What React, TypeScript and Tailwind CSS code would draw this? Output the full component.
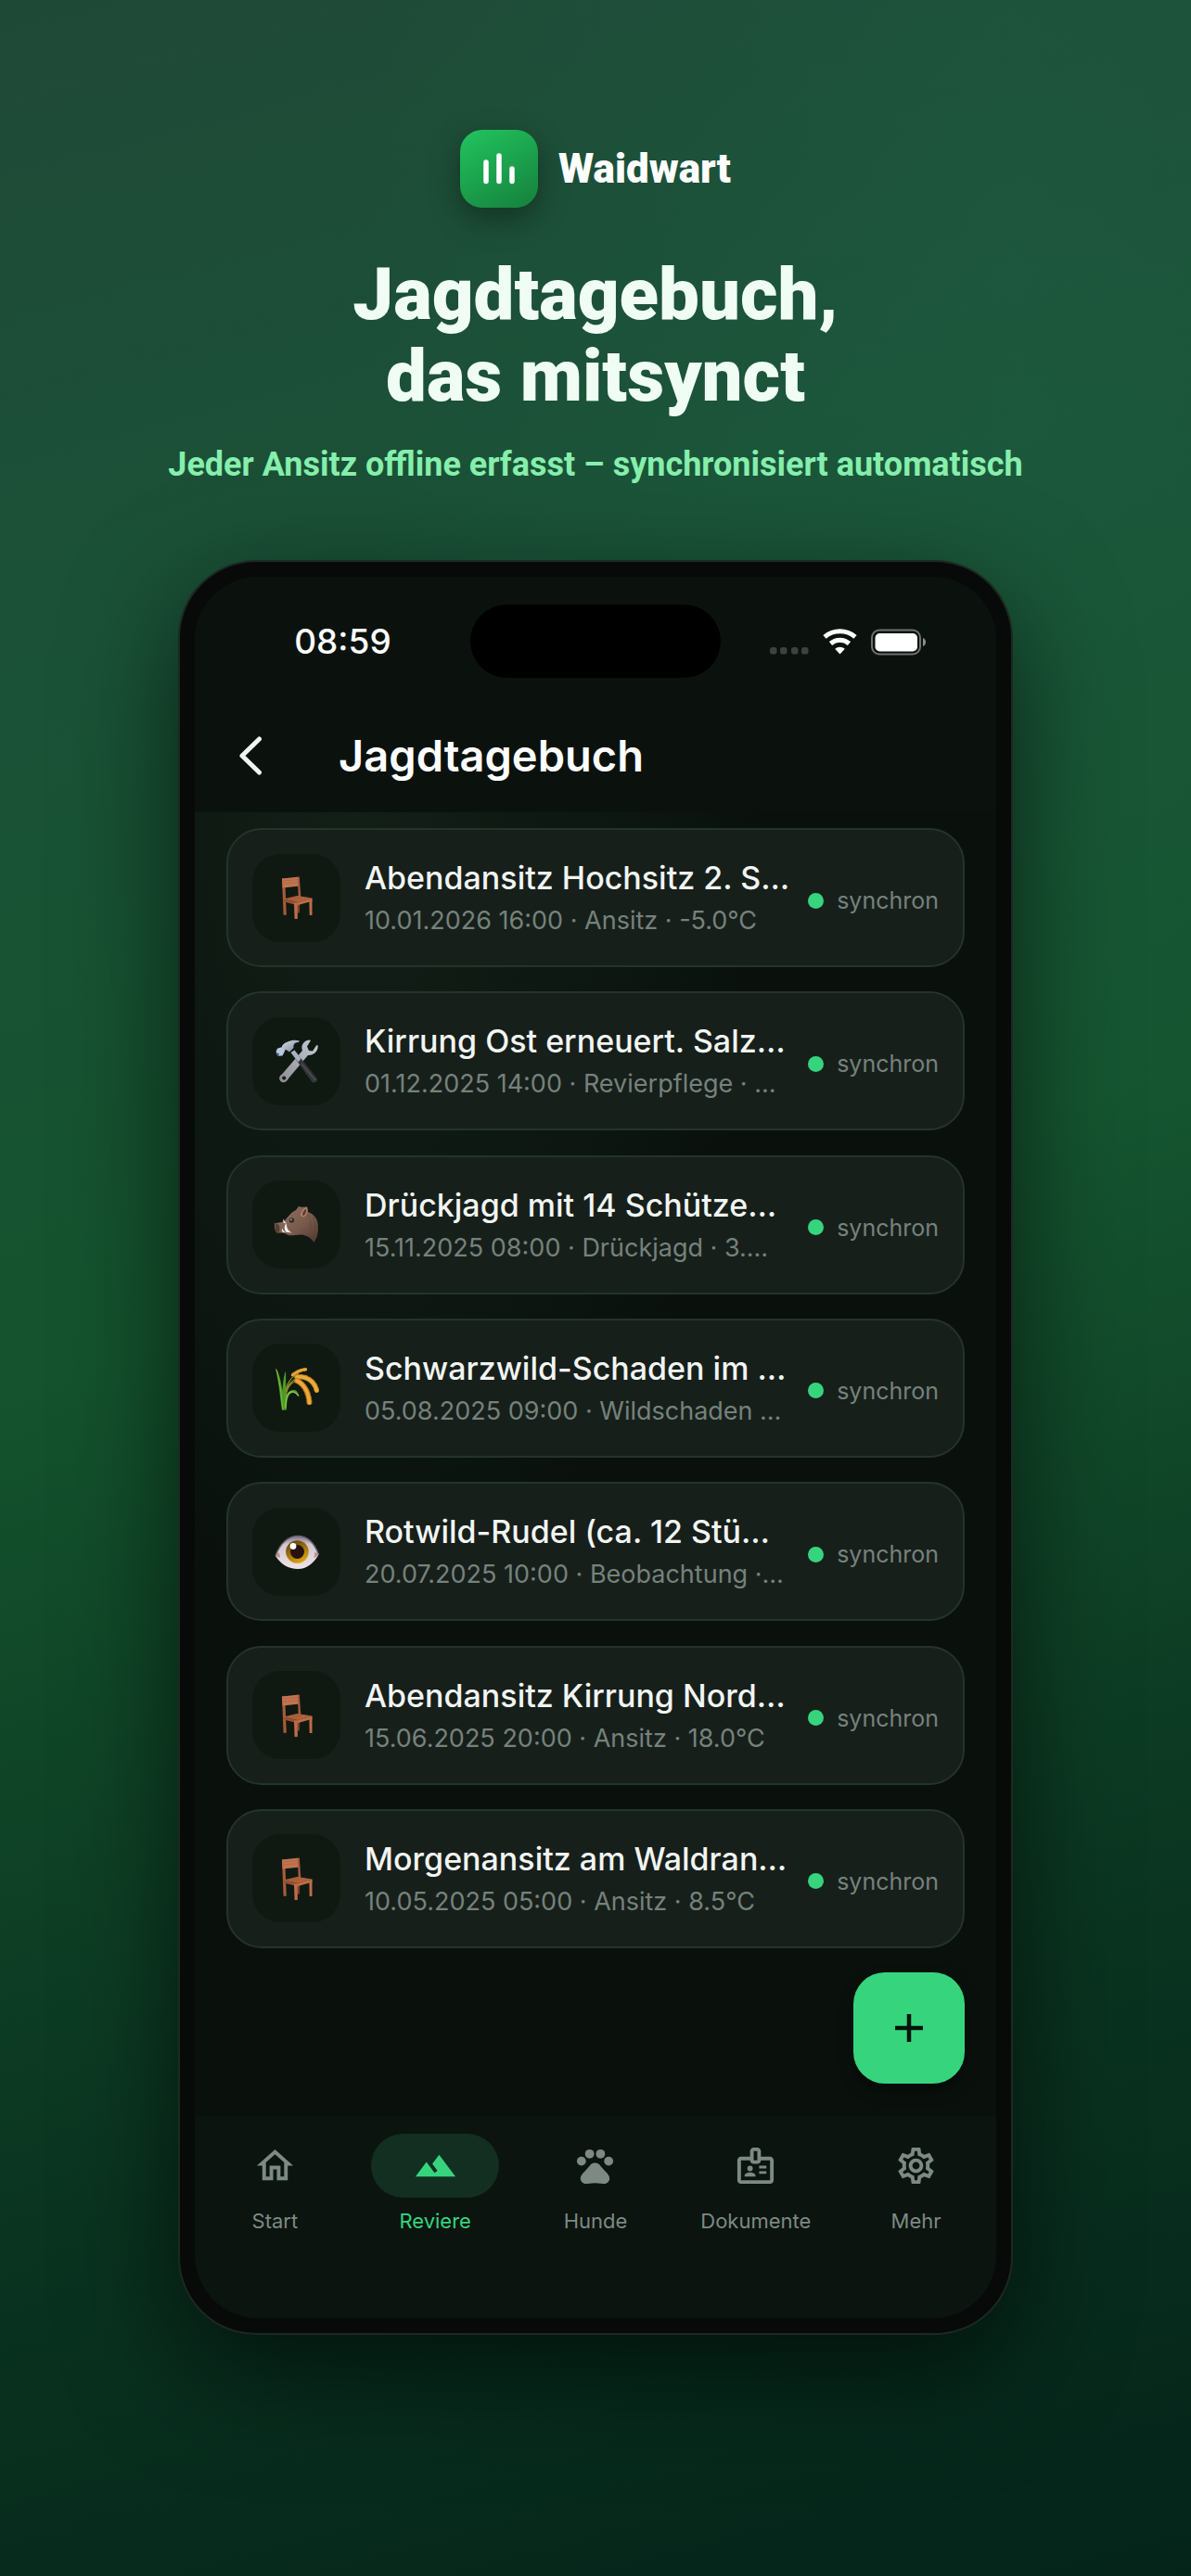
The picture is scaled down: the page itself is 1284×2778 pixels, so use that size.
import { MdOutlineHome, MdLandscape, MdPets, MdOutlineBadge, MdOutlineSettings } from "react-icons/md";

type IconName = "chair" | "tools" | "boar" | "crop" | "eye";

const entries: { icon: IconName; title: string; meta: string }[] = [
  { icon: "chair", title: "Abendansitz Hochsitz 2. S…", meta: "10.01.2026 16:00 · Ansitz · -5.0°C" },
  { icon: "tools", title: "Kirrung Ost erneuert. Salz…", meta: "01.12.2025 14:00 · Revierpflege · …" },
  { icon: "boar", title: "Drückjagd mit 14 Schütze…", meta: "15.11.2025 08:00 · Drückjagd · 3.…" },
  { icon: "crop", title: "Schwarzwild-Schaden im …", meta: "05.08.2025 09:00 · Wildschaden …" },
  { icon: "eye", title: "Rotwild-Rudel (ca. 12 Stü…", meta: "20.07.2025 10:00 · Beobachtung ·…" },
  { icon: "chair", title: "Abendansitz Kirrung Nord…", meta: "15.06.2025 20:00 · Ansitz · 18.0°C" },
  { icon: "chair", title: "Morgenansitz am Waldran…", meta: "10.05.2025 05:00 · Ansitz · 8.5°C" },
];

const tabs = [
  { label: "Start", Icon: MdOutlineHome, active: false },
  { label: "Reviere", Icon: MdLandscape, active: true },
  { label: "Hunde", Icon: MdPets, active: false },
  { label: "Dokumente", Icon: MdOutlineBadge, active: false },
  { label: "Mehr", Icon: MdOutlineSettings, active: false },
];

function Chair() {
  return (
    <svg viewBox="0 0 48 48" className="size-12" aria-hidden="true">
      <path d="M24.500 29h2.800l-.4 11.500h-2.400z" fill="#7d4128" />
      <path d="M8 3.600l3.200-.3 1.600 39.500H9.600z" fill="#a65b3a" />
      <path d="M8 3.400L26.500 1.500l.6 10L8.600 13.400z" fill="#c07550" />
      <path d="M9 6l17-1.600M9.200 9l17-1.400" stroke="#a9613f" strokeWidth=".6" />
      <path d="M24.800 2l2 0 1.600 22.400-2.600.3z" fill="#a65b3a" />
      <path d="M9.800 25.600l14.600-3.600L40.500 24.500 24.600 29z" fill="#b0633f" />
      <path d="M14 26l12-3M18 27l12-3.200" stroke="#9a5433" strokeWidth=".6" />
      <path d="M9.800 25.600l14.800 3.400v3.200L10 28.600z" fill="#96502f" />
      <path d="M24.600 29L40.500 24.500v3.200l-15.900 4.500z" fill="#bd6d47" />
      <path d="M21 29.500h3.800V47h-3.200z" fill="#bd6d47" />
      <path d="M37.400 26.400l3.100-.8V43h-2.800z" fill="#bd6d47" />
    </svg>
  );
}

function Tools() {
  return (
    <svg viewBox="0 0 48 48" className="size-12" aria-hidden="true">
      <defs>
        <linearGradient id="steel" x1="0" y1="0" x2="1" y2="1">
          <stop offset="0" stopColor="#d3dde8" />
          <stop offset="1" stopColor="#77828f" />
        </linearGradient>
        <linearGradient id="shaft" x1="1" y1="0" x2="0" y2="1">
          <stop offset="0" stopColor="#c3ccd6" />
          <stop offset="1" stopColor="#8f8a92" />
        </linearGradient>
      </defs>
      <path d="M30 13c-2-5 1-10.500 7-11.500l2 .5-4 6.500 2 4.500 4 .5 4-6 1.500-.500c1.300 6-4 11.500-10.500 11L15 43c-1.500 4-6 5.500-8.500 3s-1.300-6 1.500-7.500z" fill="url(#shaft)" />
      <circle cx="10.200" cy="42.600" r="2.100" fill="#16201b" />
      <path d="M17.500 15l4-2.500L46 43.500c.5 3-3 5-5.500 3.500z" fill="#34363b" />
      <path d="M17.500 15l4-2.500 7 9-3 4z" fill="#a9b3bd" />
      <path d="M29 27l15 18" stroke="#5b5e66" strokeWidth="1" />
      <path d="M8 8c4-5 12-7.500 19-5.500l-1 1.600c-4 0-6 2-5.500 6L16 14.500l-3.500-2.500L8 14z" fill="url(#steel)" />
      <path d="M3.500 10.500l5-1.500 2.500 4.500-2.500 5-4 .3C1 17 1 13 3.500 10.500z" fill="#b9c9dc" />
      <path d="M2.200 15l3 1.500-1 2.300C2.400 18 1.600 16.500 2.200 15z" fill="#3f66a5" />
    </svg>
  );
}

function Boar() {
  return (
    <svg viewBox="0 0 48 48" className="size-12" aria-hidden="true">
      <defs>
        <linearGradient id="fur" x1="0" y1="0" x2="1" y2="1">
          <stop offset="0" stopColor="#957562" />
          <stop offset=".6" stopColor="#77594b" />
          <stop offset="1" stopColor="#4b362e" />
        </linearGradient>
      </defs>
      <path d="M1 22.500c3-1.500 7-1 9.500-2.500C14 16 17 11 23 8l3-4 3 .8L35 4.500l1 5.500c6 2 10 7 10.800 13-.3 3 .5 5 0 8l-1 6-1.500 2.500-1.800 3.500c-3-4.500-7-8-14-8.500-6 0-10 1.500-14 .5-2-1.500-4.500-2.500-7-2.500l-5 0c-2-2-3.500-8-2.500-11z" fill="url(#fur)" />
      <path d="M28 14c0-4 3-8 7-9.500 1.200 4 .2 9-3.500 11z" fill="#b58371" />
      <path d="M30 13.500c0-3 1.500-5.500 4-7 .5 3-.4 6-2.500 7.500z" fill="#5d3b33" />
      <path d="M1 23c2-.6 4 .5 4.500 3.500.3 3-.6 5.500-2 7-2-2-3.500-7.500-2.500-10.500z" fill="#563d35" />
      <circle cx="18.500" cy="19" r="2.700" fill="#33302f" />
      <circle cx="17.800" cy="18.300" r=".8" fill="#d2d6da" />
      <path d="M10 17.500c.2 2 1.200 3.500 2.700 4l-2.500.8c-1.200-1.500-1.300-3.500-.2-4.800z" fill="#e8e4df" />
      <path d="M13 22c-.5 4.500 1.500 8.500 6 10.500l-6.500-.8c-2.500-3-2.300-7 .5-9.700z" fill="#f1efec" />
      <path d="M8.500 28c.5 2 1.700 3.300 3.500 4l-3-.2c-1.200-1-1.400-2.500-.5-3.800z" fill="#fff" />
      <path d="M36 13c3 5 4 11 2 17M41 15c3 6 3 12 2 18" stroke="#5d453a" strokeWidth="1" fill="none" opacity=".6" />
    </svg>
  );
}

function Crop() {
  return (
    <svg viewBox="0 0 48 48" className="size-12" aria-hidden="true">
      <g fill="none" strokeLinecap="round">
        <path d="M11 32C12 20 18 11 26 8" stroke="#8c8b2c" strokeWidth="1.200" />
        <path d="M11 33C12 21 20 13 30 12" stroke="#9b9630" strokeWidth="1.200" />
        <path d="M12 34C13 24 17 17 26 16" stroke="#a59a32" strokeWidth="1.200" />
        <path d="M20 9.500C25 5.500 30 4 35 3.600" stroke="#c98a22" strokeWidth="3.800" strokeDasharray="1.800 2.400" />
        <path d="M19 10C25 5.500 30 4 34 3.800" stroke="#e3a53a" strokeWidth="2.400" />
        <path d="M24 12C34 10.500 43 16 45.500 27" stroke="#c9851e" strokeWidth="5.600" strokeDasharray="1.600 2.800" />
        <path d="M24 12C34 10.500 43 16 45.500 27" stroke="#e9ab3f" strokeWidth="3.400" />
        <path d="M24 16C31 19 37 28 37.500 40" stroke="#c07b18" strokeWidth="6" strokeDasharray="1.600 2.800" />
        <path d="M24 16C31 19 37 28 37.500 40" stroke="#eba93a" strokeWidth="3.600" />
      </g>
      <path d="M8 47.500C6 35 5 20 1 2c4 5 6 15 7.500 25C9 18 10 10 12 5.500 12.500 14 12 24 12.500 34 14 27 19 25 23 26.500c2 1.500 3 4 3.500 6.500-3-4-7-5.500-10-2.500-3 4-3.500 10-3.500 17z" fill="#4d9a28" />
      <path d="M9 47.500C7.500 36 7 22 2 4" stroke="#77bf3c" strokeWidth="1" fill="none" />
      <path d="M12 45c0-8 1-16 6-17 4-.5 6 2 8 4.500" stroke="#8ccb45" strokeWidth="1.300" fill="none" />
    </svg>
  );
}

function Eye() {
  return (
    <svg viewBox="0 0 48 48" className="size-12" aria-hidden="true">
      <defs>
        <linearGradient id="sclera" x1="0" y1="0" x2="0" y2="1">
          <stop offset="0" stopColor="#7c7486" />
          <stop offset=".25" stopColor="#cfc6cf" />
          <stop offset="1" stopColor="#efe4e6" />
        </linearGradient>
        <linearGradient id="iris" x1=".2" y1="0" x2=".7" y2="1">
          <stop offset="0" stopColor="#5f3a10" />
          <stop offset="1" stopColor="#e0ac0c" />
        </linearGradient>
      </defs>
      <path d="M1 29C6 15 15 7.500 25 7.500S43 15 47.500 27.500C42 37 35 43 25 43S7 38 1 29z" fill="url(#sclera)" />
      <path d="M1 29C6 15 15 7.500 25 7.500S43 15 47.500 27.500" fill="none" stroke="#696172" strokeWidth="1.500" />
      <path d="M1 29l4-4 1 6zM47.500 27.500l-4-3-1 7z" fill="#b98f93" />
      <circle cx="24.500" cy="24.500" r="12.300" fill="url(#iris)" />
      <circle cx="24.500" cy="24.500" r="7.500" fill="#28120f" />
      <circle cx="20" cy="18.500" r="3.400" fill="#fff" />
    </svg>
  );
}

const icons = { chair: Chair, tools: Tools, boar: Boar, crop: Crop, eye: Eye };

function StatusBar() {
  return (
    <div className="grid grid-cols-[1fr_270px_1fr] items-center pt-[30px]">
      <time className="pl-[22px] text-center text-[37px] leading-[44px] font-medium text-white">08:59</time>
      <div className="h-[79px] rounded-full bg-black" />
      <div className="flex items-center pl-[53px]">
        <svg viewBox="0 0 170 30" className="h-[30px] w-[170px]" aria-label="WLAN verbunden, Akku voll" role="img">
          <g fill="#3d423f">
            <rect x="0" y="21" width="7.500" height="7.500" rx="2.800" />
            <rect x="11" y="21" width="7.500" height="7.500" rx="2.800" />
            <rect x="23" y="21" width="7.500" height="7.500" rx="2.800" />
            <rect x="34" y="21" width="7.500" height="7.500" rx="2.800" />
          </g>
          <g fill="none" stroke="#fff">
            <path d="M59 9.800C68.500 1.700 82.500 1.700 92 9.800" strokeWidth="5" />
            <path d="M65.500 17C71.500 12 79.500 12 85.500 17" strokeWidth="5" />
          </g>
          <path d="M75.500 28.500l-5.300-5.700c3-2.700 7.600-2.700 10.600 0z" fill="#fff" />
          <rect x="110" y="2.500" width="52" height="26" rx="8" fill="none" stroke="#6d716f" strokeWidth="2" />
          <rect x="113.500" y="6" width="45.500" height="19.500" rx="5" fill="#fff" />
          <path d="M165 11c4 1.500 4 7.500 0 9z" fill="#8b8f8d" />
        </svg>
      </div>
    </div>
  );
}

function EntryCard({ icon, title, meta }: (typeof entries)[number]) {
  const Icon = icons[icon];
  return (
    <li className="flex h-[150px] items-center gap-[26px] rounded-[38px] border-2 border-[#24332c] bg-[#171f1b] px-[26px]">
      <div className="flex size-[95px] shrink-0 items-center justify-center rounded-[30px] bg-[#101911]">
        <Icon />
      </div>
      <div className="min-w-0 flex-1 whitespace-nowrap">
        <h3 className="pt-[2px] text-[34px] leading-[44px] font-medium text-[#f1f5f2]">{title}</h3>
        <p className="pt-[4px] text-[27px] leading-[40px] text-[#75827b]">{meta}</p>
      </div>
      <div className="flex shrink-0 items-center gap-[14px] pt-[6px]">
        <span className="size-[17px] rounded-full bg-[#36d57d]" />
        <span className="text-[25px] leading-[32px] text-[#75827b]">synchron</span>
      </div>
    </li>
  );
}

export default function App() {
  return (
    <div className="flex min-h-screen flex-col items-center bg-[radial-gradient(ellipse_at_85%_10%,rgba(34,110,80,0.22),transparent_45%),linear-gradient(165deg,#1f4937_0%,#1a5237_24%,#14532d_48%,#0a3320_78%,#04241a_100%)] px-8 pt-[140px] pb-[259px] font-['Inter',sans-serif]">
      <header className="flex flex-col items-center font-['Roboto',sans-serif]">
        <div className="flex items-center gap-[22px]">
          <div className="flex size-[84px] items-center justify-center rounded-[24px] bg-linear-150 from-[#22c55e] to-[#15803d] shadow-[0_12px_32px_rgba(0,0,0,0.35)]">
            <svg viewBox="0 0 34 34" className="size-[34px]" aria-hidden="true">
              <g stroke="#fff" strokeWidth="5.500" strokeLinecap="round">
                <path d="M3 10v20.500M17 3v27.500M31 17v13.500" />
              </g>
            </svg>
          </div>
          <span className="text-[44px] leading-[54px] font-black text-white">Waidwart</span>
        </div>
        <h1 className="pt-[50px] text-center text-[78px] leading-[88px] font-black text-[#f0fdf4]">
          Jagdtagebuch,
          <br />
          das mitsynct
        </h1>
        <p className="pt-[26px] text-center text-[36px] leading-[50px] font-bold text-[#86efac]">
          Jeder Ansitz offline erfasst – synchronisiert automatisch
        </p>
      </header>

      <main className="mt-[78px] w-full max-w-[900px] rounded-[84px] border-2 border-[#1c2922] bg-[#070a09] p-[16px] shadow-[0_40px_120px_rgba(0,0,0,0.6)]">
        <div className="overflow-hidden rounded-[68px] bg-[#0a100d]">
          <div className="h-[254px] bg-[#0b120e]">
            <StatusBar />
            <div className="flex items-center gap-[83px] pt-[56px] pl-[48px]">
              <button type="button" aria-label="Zurück">
                <svg viewBox="0 0 24 42" className="h-[42px] w-[24px]" aria-hidden="true">
                  <path d="M21.500 3L3 21l18.500 18" fill="none" stroke="#f1f5f2" strokeWidth="5" strokeLinecap="round" strokeLinejoin="round" />
                </svg>
              </button>
              <h2 className="text-[47px] leading-[56px] font-semibold text-white">Jagdtagebuch</h2>
            </div>
          </div>

          <div className="bg-[radial-gradient(ellipse_at_20%_0%,#121f17_0%,#0a110d_45%)] px-[34px] pt-[17px] pb-[35px]">
            <ul className="flex min-h-[1208px] flex-col justify-between">
              {entries.map((entry) => (
                <EntryCard key={entry.meta} {...entry} />
              ))}
            </ul>
            <div className="flex justify-end pt-[26px]">
              <button
                type="button"
                aria-label="Neuer Eintrag"
                className="flex size-[120px] items-center justify-center rounded-[34px] bg-[#36d57d] shadow-[0_8px_16px_rgba(0,0,0,0.45)]"
              >
                <svg viewBox="0 0 32 32" className="size-8" aria-hidden="true">
                  <path d="M16 1v30M1 16h30" stroke="#07130c" strokeWidth="4.500" />
                </svg>
              </button>
            </div>
          </div>

          <nav className="grid grid-cols-5 bg-[#0b140f] pt-[19px] pb-[90px]">
            {tabs.map(({ label, Icon, active }) => (
              <a key={label} href="#" aria-current={active ? "page" : undefined} className={active ? "flex flex-col items-center text-[#36d57d]" : "flex flex-col items-center text-[#7d8a83]"}>
                <span className={active ? "flex h-[69px] w-[138px] items-center justify-center rounded-full bg-[#122f21]" : "flex h-[69px] w-[138px] items-center justify-center"}>
                  <Icon className="size-[47px]" />
                </span>
                <span className="pt-[10px] text-[22px] leading-[30px]">{label}</span>
              </a>
            ))}
          </nav>
        </div>
      </main>
    </div>
  );
}
